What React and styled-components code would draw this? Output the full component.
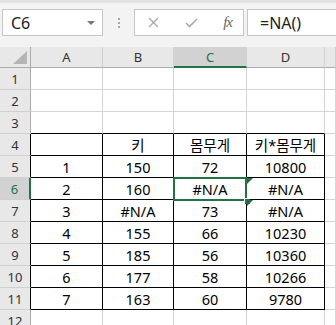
import React from 'react';
import styled, { createGlobalStyle } from 'styled-components';

const GlobalStyle = createGlobalStyle`
  body {
    margin: 0;
    background: #fff;
    overflow: hidden;
    font-family: "Noto Sans", "Noto Sans CJK KR", sans-serif;
  }
`;

const Window = styled.div`
  width: 336px;
  height: 325px;
  overflow: hidden;
  display: flex;
  flex-direction: column;
`;

const Toolbar = styled.div`
  height: 47px;
  flex: none;
  box-sizing: border-box;
  background: linear-gradient(#e3e3e3 0, #e3e3e3 3px, #f3f3f3 3px);
  display: flex;
  align-items: flex-start;
  padding: 9px 0 0 2px;
`;

const NameBox = styled.div`
  width: 101px;
  height: 27px;
  box-sizing: border-box;
  border: 1px solid #c6c6c6;
  background: #fff;
  display: flex;
  align-items: center;
  justify-content: space-between;
  padding: 0 7px 0 8px;
  font-size: 16px;
  color: #222;
`;

const Arrow = styled.span`
  width: 0;
  height: 0;
  border-left: 4px solid transparent;
  border-right: 4px solid transparent;
  border-top: 4px solid #777;
`;

const Grip = styled.div`
  width: 31px;
  height: 27px;
  display: flex;
  flex-direction: column;
  align-items: center;
  justify-content: center;
  gap: 2px;

  span {
    width: 2px;
    height: 2px;
    background: #a6a6a6;
  }
`;

const FxButtons = styled.div`
  width: 110px;
  height: 27px;
  box-sizing: border-box;
  border: 1px solid #c6c6c6;
  background: #fff;
  display: flex;
  align-items: center;
  padding: 0 11px 0 13px;
  justify-content: space-between;
`;

const Fx = styled.span`
  font-family: "Liberation Serif", serif;
  font-style: italic;
  font-size: 15px;
  color: #666;
  letter-spacing: -1px;
`;

const Formula = styled.div`
  flex: 1;
  height: 27px;
  margin-left: 3px;
  box-sizing: border-box;
  border: 1px solid #c6c6c6;
  border-right: none;
  background: #fff;
  display: flex;
  align-items: center;
  padding-left: 12px;
  font-size: 16px;
  color: #222;
`;

const Sheet = styled.div`
  display: grid;
  grid-template-columns: 31px 72px 71px 73px 78px 1fr;
  grid-template-rows: 21px;
  grid-auto-rows: 22px;
  flex: 1;
  overflow: hidden;
`;

const Header = styled.div`
  box-sizing: border-box;
  background: ${p => (p.$active ? '#d2d2d2' : '#e8e8e8')};
  color: ${p => (p.$active ? '#217346' : '#333')};
  font-size: 13px;
  display: flex;
  align-items: center;
  justify-content: center;
  border-right: ${p => (p.$rowHead ? (p.$active ? '2px solid #217346' : `1px solid ${p.$edge || '#ababab'}`) : '1px solid #d0d0d0')};
  border-bottom: ${p => (p.$rowHead ? '1px solid #d0d0d0' : p.$active ? '2px solid #217346' : '1px solid #ababab')};
`;

const Corner = styled(Header)`
  justify-content: flex-end;
  align-items: flex-end;
  padding: 0 3px 3px 0;
  border-right: 1px solid #ababab;

  &::after {
    content: '';
    width: 0;
    height: 0;
    border-left: 14px solid transparent;
    border-bottom: 13px solid #b5b5b5;
  }
`;

const Cell = styled.div`
  position: relative;
  box-sizing: border-box;
  border-right: 1px solid ${p => p.$right || '#d4d4d4'};
  border-bottom: 1px solid ${p => p.$bottom || '#d4d4d4'};
  display: flex;
  align-items: center;
  justify-content: center;
  font-size: 14.5px;
  color: #000;
`;

const Selection = styled.div`
  position: absolute;
  top: -1px;
  left: -1px;
  right: -1px;
  bottom: -2px;
  border: 2px solid #217346;
  z-index: 2;
  pointer-events: none;

  &::after {
    content: '';
    position: absolute;
    right: -5px;
    bottom: -5px;
    width: 5px;
    height: 5px;
    background: #217346;
    border-left: 1px solid #fff;
    border-top: 1px solid #fff;
  }
`;

const ErrorMark = styled.span`
  position: absolute;
  top: 0;
  left: 0;
  width: 0;
  height: 0;
  border-top: 6px solid #1e7145;
  border-right: 6px solid transparent;
  z-index: 3;
`;

const cols = ['A', 'B', 'C', 'D', ''];

const data = {
  4: ['', '키', '몸무게', '키*몸무게'],
  5: ['1', '150', '72', '10800'],
  6: ['2', '160', '#N/A', '#N/A'],
  7: ['3', '#N/A', '73', '#N/A'],
  8: ['4', '155', '66', '10230'],
  9: ['5', '185', '56', '10360'],
  10: ['6', '177', '58', '10266'],
  11: ['7', '163', '60', '9780'],
};

const errorCells = ['6-3', '7-3'];

const rows = Array.from({ length: 12 }, (_, i) => i + 1);

const App = () => (
  <Window>
    <GlobalStyle />
    <Toolbar>
      <NameBox>
        <span>C6</span>
        <Arrow />
      </NameBox>
      <Grip>
        <span />
        <span />
        <span />
      </Grip>
      <FxButtons>
        <svg width="11" height="11" viewBox="0 0 11 11">
          <path d="M1 1L10 10M10 1L1 10" stroke="#a8a8a8" strokeWidth="1.3" fill="none" />
        </svg>
        <svg width="13" height="10" viewBox="0 0 13 10">
          <path d="M1 5L4.5 8.5L12 1" stroke="#a8a8a8" strokeWidth="1.6" fill="none" />
        </svg>
        <Fx>fx</Fx>
      </FxButtons>
      <Formula>=NA()</Formula>
    </Toolbar>
    <Sheet>
      <Corner />
      {cols.map((c, i) => (
        <Header key={'h' + i} $active={c === 'C'}>{c}</Header>
      ))}
      {rows.map(r => {
        const inTable = r >= 4 && r <= 11;
        return (
          <React.Fragment key={r}>
            <Header $rowHead $active={r === 6} $edge={inTable ? '#000' : null}>{r}</Header>
            {cols.map((c, ci) => {
              const inCols = ci < 4;
              const value = inCols && data[r] ? data[r][ci] : '';
              const right = inTable && inCols ? '#000' : null;
              const bottom = inCols && r >= 3 && r <= 11 ? '#000' : null;
              return (
                <Cell key={c + r} $right={right} $bottom={bottom}>
                  {errorCells.includes(`${r}-${ci}`) && <ErrorMark />}
                  {value}
                  {r === 6 && ci === 2 && <Selection />}
                </Cell>
              );
            })}
          </React.Fragment>
        );
      })}
    </Sheet>
  </Window>
);

export default App;
